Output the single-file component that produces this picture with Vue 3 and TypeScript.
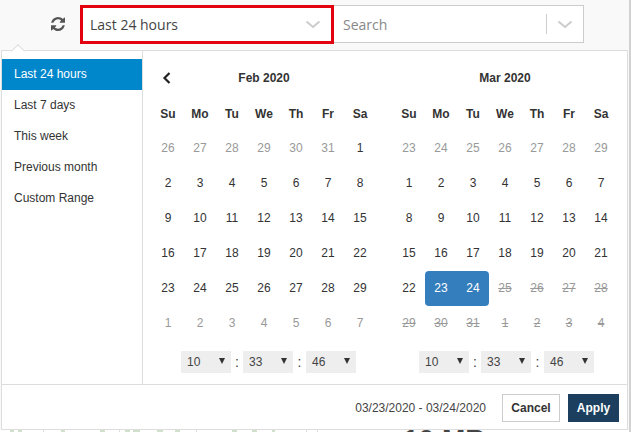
<script setup lang="ts">
interface Day { n: number; cls: string }
const heads = ['Su', 'Mo', 'Tu', 'We', 'Th', 'Fr', 'Sa'];
const ranges = ['Last 24 hours', 'Last 7 days', 'This week', 'Previous month', 'Custom Range'];
function mk(nums: number[], f: (n: number, i: number) => string): Day[] {
  return nums.map((n, i) => ({ n, cls: f(n, i) }));
}
const feb = mk(
  [26,27,28,29,30,31,1,2,3,4,5,6,7,8,9,10,11,12,13,14,15,16,17,18,19,20,21,22,23,24,25,26,27,28,29,1,2,3,4,5,6,7],
  (_n, i) => (i < 6 || i >= 35 ? 'off' : ''),
);
const mar = mk(
  [23,24,25,26,27,28,29,1,2,3,4,5,6,7,8,9,10,11,12,13,14,15,16,17,18,19,20,21,22,23,24,25,26,27,28,29,30,31,1,2,3,4],
  (_n, i) => {
    if (i < 7) return 'off';
    if (i === 29) return 'sel first';
    if (i === 30) return 'sel last';
    if (i > 30) return 'dis';
    return '';
  },
);
const cals = [
  { title: 'Feb 2020', days: feb, prev: true, side: 'left' },
  { title: 'Mar 2020', days: mar, prev: false, side: 'right' },
];
const times = ['10', '33', '46'];
// [gap before, width, kind] of the page content that peeks out under the popover
const marks: [number, number, string][] = [
  [10, 4, 'g'], [4, 4, 'g'], [21, 1, 'l'], [17, 4, 'g'], [35, 5, 'g'], [14, 1, 'l'], [5, 5, 'g'],
  [3, 7, 'g'], [17, 6, 'g'], [12, 5, 'g'], [16, 1, 'l'], [35, 5, 'g'], [15, 5, 'g'], [15, 3, 'g'],
  [31, 1, 'b'], [10, 1, 'b'],
];
</script>

<template>
  <div class="page">
    <header class="bar">
      <svg class="refresh" width="14" height="14" viewBox="0 0 1536 1536" aria-hidden="true">
        <path fill="#555" d="M1511 928q0 5-1 7-64 268-268 434.500T764 1536q-146 0-282.500-55T238 1324l-129 129q-19 19-45 19t-45-19-19-45V960q0-26 19-45t45-19h448q26 0 45 19t19 45-19 45l-137 137q71 66 161 102t187 36q134 0 250-65t186-179q11-17 53-117 8-23 30-23h192q13 0 22.500 9.500T1511 928zM1536 128v448q0 26-19 45t-45 19h-448q-26 0-45-19t-19-45 19-45l138-138Q969 256 768 256q-134 0-250 65T332 500q-11 17-53 117-8 23-30 23H50q-13 0-22.500-9.500T18 608v-7q65-268 270-434.500T768 0q146 0 284 55.500T1297 212l130-129q19-19 45-19t45 19 19 45z"/>
      </svg>
      <div class="range-box">
        <span>Last 24 hours</span>
        <svg class="chev" width="16" height="9" viewBox="0 0 16 9" aria-hidden="true"><path d="M1.500 1.500 8 7l6.500-5.500" fill="none" stroke="#ccc" stroke-width="2"/></svg>
      </div>
      <div class="search-box">
        <span class="ph">Search</span>
        <i class="sep"></i>
        <svg class="chev2" width="16" height="9" viewBox="0 0 16 9" aria-hidden="true"><path d="M1.500 1.500 8 7l6.500-5.500" fill="none" stroke="#ccc" stroke-width="2"/></svg>
      </div>
    </header>

    <section class="pop">
      <i class="arrow"></i>
      <div class="main">
        <ul class="ranges">
          <li v-for="(r, i) in ranges" :key="r" :class="{ active: i === 0 }">{{ r }}</li>
        </ul>
        <div class="cals">
          <div v-for="c in cals" :key="c.title" class="cal">
            <div class="title">
              <svg v-if="c.prev" class="prev" width="10" height="12" viewBox="0 0 10 12" aria-hidden="true"><path d="M7.500 1 2.500 6l5 5" fill="none" stroke="#222" stroke-width="2.200"/></svg>
              {{ c.title }}
            </div>
            <div class="grid">
              <b v-for="h in heads" :key="h" class="head">{{ h }}</b>
              <span v-for="(d, i) in c.days" :key="i" class="day" :class="d.cls">{{ d.n }}</span>
            </div>
            <div class="time" :class="c.side">
              <template v-for="(t, i) in times" :key="t">
                <span v-if="i" class="colon" :class="{ wide: i === 2 }">:</span>
                <span class="sel-box">{{ t }}<i class="tri"></i></span>
              </template>
            </div>
          </div>
        </div>
      </div>
      <footer class="foot">
        <span class="dates">03/23/2020 - 03/24/2020</span>
        <button class="btn cancel" type="button">Cancel</button>
        <button class="btn apply" type="button">Apply</button>
      </footer>
    </section>

    <div class="under">
      <i
        v-for="(m, i) in marks"
        :key="i"
        class="mark"
        :class="m[2]"
        :style="{ marginLeft: m[0] + 'px', width: m[1] + 'px' }"
      ></i>
      <span class="big">10 MB</span>
    </div>
    <i class="edge"></i>
  </div>
</template>

<style>
html, body { margin: 0; background: #fff; }
</style>

<style scoped>
.page {
  position: relative;
  width: 631px;
  height: 432px;
  overflow: hidden;
  background: #f9f9f9;
  font-family: "Liberation Sans", Arial, sans-serif;
  font-size: 12px;
  color: #333;
}
.edge {
  position: absolute;
  right: 0;
  top: 0;
  width: 2px;
  height: 432px;
  background: #d2d2d2;
}
.bar {
  display: flex;
  align-items: flex-start;
  height: 50px;
  padding: 5px 0 0 51px;
  box-sizing: border-box;
  will-change: opacity;
}
.refresh { margin: 12px 15px 0 0; }
.range-box {
  display: flex;
  align-items: center;
  justify-content: space-between;
  width: 254px;
  height: 39px;
  box-sizing: border-box;
  padding: 0 10px 0 7px;
  border: 3px solid #e3000f;
  background: #fff;
  font-family: "Open Sans", sans-serif;
  font-size: 14px;
  color: #444;
}
.search-box {
  display: flex;
  align-items: center;
  width: 250px;
  height: 38px;
  box-sizing: border-box;
  border: 1px solid #ccc;
  border-left: 0;
  background: #fff;
  padding-left: 9px;
  font-family: "Open Sans", sans-serif;
  font-size: 14px;
}
.ph { color: #888; flex: 1; }
.sep { width: 1px; height: 20px; background: #ccc; margin-right: 10px; }
.chev2 { margin-right: 10px; }

.pop {
  position: relative;
  width: 627px;
  height: 380px;
  margin-left: 1px;
  box-sizing: border-box;
  background: #fff;
  border: 1px solid #ddd;
  display: flex;
  flex-direction: column;
  will-change: opacity;
}
.arrow {
  position: absolute;
  left: 11px;
  top: -5px;
  width: 9px;
  height: 9px;
  background: #fff;
  border-left: 1px solid #ddd;
  border-top: 1px solid #ddd;
  transform: rotate(45deg);
}
.main { display: flex; height: 333px; border-bottom: 1px solid #ddd; flex: none; }
.ranges {
  list-style: none;
  margin: 0;
  padding: 8px 0 0;
  width: 141px;
  box-sizing: border-box;
  border-right: 1px solid #ddd;
}
.ranges li { height: 31px; line-height: 30px; padding-left: 12px; }
.ranges li.active { background: #0086cb; color: #fff; }
.cals { display: flex; padding: 10px 0 0 9px; gap: 17px; }
.cal { width: 224px; }
.title {
  position: relative;
  height: 35px;
  line-height: 34px;
  text-align: center;
  font-weight: 700;
}
.prev { position: absolute; left: 10px; top: 11px; }
.grid { display: grid; grid-template-columns: repeat(7, 32px); grid-auto-rows: 35px; }
.head { line-height: 36px; text-align: center; font-weight: 700; font-size: 12px; }
.day { line-height: 35px; text-align: center; color: #333; }
.day.off { color: #999; }
.day.dis { color: #999; text-decoration: line-through; }
.day.sel { background: #357ebd; color: #fff; }
.day.first { border-radius: 4px 0 0 4px; }
.day.last { border-radius: 0 4px 4px 0; }
.time { display: flex; align-items: center; margin-top: 10px; }
.time.left { padding-left: 29px; }
.time.right { padding-left: 26px; }
.sel-box {
  position: relative;
  width: 50px;
  height: 22px;
  line-height: 22px;
  box-sizing: border-box;
  padding-left: 6px;
  background: #eee;
  color: #444;
}
.tri {
  position: absolute;
  right: 6px;
  top: 7px;
  width: 0;
  height: 0;
  border-left: 3px solid transparent;
  border-right: 3px solid transparent;
  border-top: 6px solid #333;
}
.colon { width: 12px; text-align: center; font-size: 14px; color: #444; }
.colon.wide { width: 13px; }
.foot {
  flex: 1;
  display: flex;
  align-items: center;
  justify-content: flex-end;
  padding: 1px 8px 0 0;
}
.dates { margin-right: 16px; color: #444; }
.btn {
  height: 28px;
  box-sizing: border-box;
  font: 700 12px "Liberation Sans", Arial, sans-serif;
  padding: 0;
}
.cancel { width: 58px; background: #fff; border: 1px solid #ccc; color: #333; margin-right: 8px; }
.apply { width: 51px; background: #1c3f5f; border: 1px solid #1c3f5f; color: #fff; }

.under { display: flex; height: 2px; overflow: hidden; background: #fff; position: relative; }
.mark { flex: none; height: 2px; }
.mark.g { background: #cfe0cb; }
.mark.l { background: #ddd; }
.mark.b { background: #ddd; }
.big {
  position: absolute;
  left: 403px;
  top: 0;
  font-size: 28px;
  line-height: 20px;
  font-weight: 700;
  color: #444;
}
</style>
